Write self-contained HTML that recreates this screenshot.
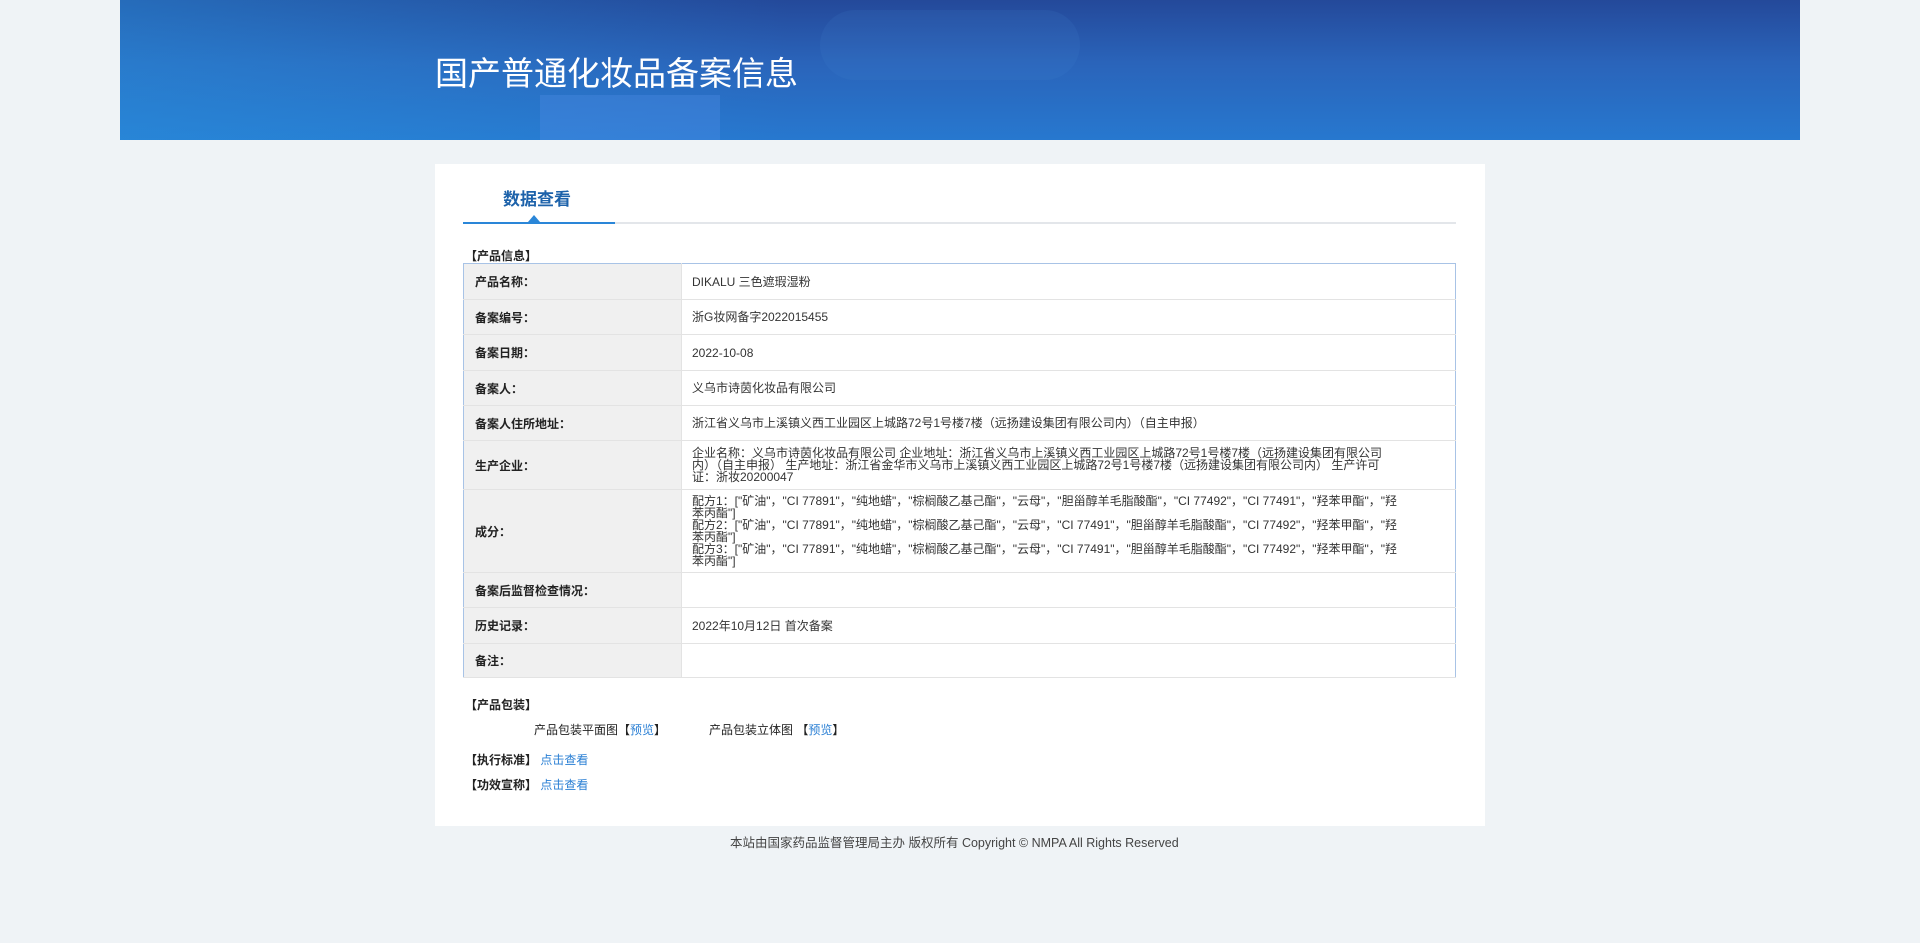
<!DOCTYPE html>
<html><head><meta charset="utf-8"><style>
*{margin:0;padding:0;box-sizing:border-box}
body{width:1920px;height:943px;background:#eff3f6;font-family:"Liberation Sans","Noto Sans CJK SC",sans-serif;color:#333;position:relative;overflow:hidden}
.ban{position:absolute;left:120px;top:0;width:1680px;height:140px;background:linear-gradient(180deg,#24499a 0%,#2a64ba 45%,#2778cf 100%);overflow:hidden}
.ban:before{content:"";position:absolute;left:0;top:0;right:0;bottom:0;background:linear-gradient(90deg,rgba(40,150,225,.45),rgba(40,150,225,0) 40%,rgba(40,120,210,0) 100%)}
.ban .d1{position:absolute;left:420px;top:95px;width:180px;height:60px;background:rgba(80,140,230,.35)}
.ban .d2{position:absolute;left:700px;top:10px;width:260px;height:70px;border-radius:35px;background:rgba(70,140,210,.12)}
.ban h1{position:absolute;left:315px;top:52px;font-size:33px;font-weight:normal;color:#fff;letter-spacing:0;line-height:44px}
.card{position:absolute;left:435px;top:164px;width:1050px;height:662px;background:#fff}
.tab{position:absolute;left:503px;top:185px;font-size:17px;font-weight:bold;color:#1d62aa}
.gl{position:absolute;left:463px;top:222px;width:993px;height:2px;background:#e3e6ea}
.bl{position:absolute;left:463px;top:222px;width:152px;height:2px;background:#2a86d8}
.tri{position:absolute;left:528px;top:215px;width:0;height:0;border-left:6px solid transparent;border-right:6px solid transparent;border-bottom:7px solid #2a86d8}
.sec{position:absolute;font-size:12px;font-weight:bold;color:#222}
table{position:absolute;left:463px;top:263px;width:993px;border-collapse:collapse;border:1px solid #a8c3e6;font-size:12px}
td{border-bottom:1px solid #e3e3e3;vertical-align:middle}
td.l{width:218px;background:#f0f0f0;padding-left:11px;font-weight:bold;color:#222;border-right:1px solid #e3e3e3}
td.v{padding:0 56px 0 10px;color:#333;line-height:12px}
.t{position:absolute;font-size:12px;color:#222}
a{color:#2a7fd4;text-decoration:none}
.foot{position:absolute;left:730px;top:832px;font-size:12.5px;color:#444}
</style></head><body>
<div class="ban"><div class="d1"></div><div class="d2"></div><h1>国产普通化妆品备案信息</h1></div>
<div class="card"></div>
<div class="tab">数据查看</div>
<div class="gl"></div><div class="bl"></div><div class="tri"></div>
<div class="sec" style="left:465px;top:247px">【产品信息】</div>
<table>
<tr style="height:36px"><td class="l">产品名称：</td><td class="v">DIKALU 三色遮瑕湿粉</td></tr>
<tr style="height:35px"><td class="l">备案编号：</td><td class="v">浙G妆网备字2022015455</td></tr>
<tr style="height:36px"><td class="l">备案日期：</td><td class="v">2022-10-08</td></tr>
<tr style="height:35px"><td class="l">备案人：</td><td class="v">义乌市诗茵化妆品有限公司</td></tr>
<tr style="height:35px"><td class="l">备案人住所地址：</td><td class="v">浙江省义乌市上溪镇义西工业园区上城路72号1号楼7楼（远扬建设集团有限公司内）（自主申报）</td></tr>
<tr style="height:49px"><td class="l">生产企业：</td><td class="v">企业名称：义乌市诗茵化妆品有限公司 企业地址：浙江省义乌市上溪镇义西工业园区上城路72号1号楼7楼（远扬建设集团有限公司内）（自主申报） 生产地址：浙江省金华市义乌市上溪镇义西工业园区上城路72号1号楼7楼（远扬建设集团有限公司内） 生产许可证：浙妆20200047</td></tr>
<tr style="height:83px"><td class="l">成分：</td><td class="v">配方1：["矿油"，"CI 77891"，"纯地蜡"，"棕榈酸乙基己酯"，"云母"，"胆甾醇羊毛脂酸酯"，"CI 77492"，"CI 77491"，"羟苯甲酯"，"羟苯丙酯"]<br>配方2：["矿油"，"CI 77891"，"纯地蜡"，"棕榈酸乙基己酯"，"云母"，"CI 77491"，"胆甾醇羊毛脂酸酯"，"CI 77492"，"羟苯甲酯"，"羟苯丙酯"]<br>配方3：["矿油"，"CI 77891"，"纯地蜡"，"棕榈酸乙基己酯"，"云母"，"CI 77491"，"胆甾醇羊毛脂酸酯"，"CI 77492"，"羟苯甲酯"，"羟苯丙酯"]</td></tr>
<tr style="height:35px"><td class="l">备案后监督检查情况：</td><td class="v"></td></tr>
<tr style="height:36px"><td class="l">历史记录：</td><td class="v">2022年10月12日 首次备案</td></tr>
<tr style="height:34px"><td class="l">备注：</td><td class="v"></td></tr>
</table>
<div class="sec" style="left:465px;top:696px">【产品包装】</div>
<div class="t" style="left:534px;top:721px">产品包装平面图【<a>预览</a>】</div>
<div class="t" style="left:709px;top:721px">产品包装立体图 【<a>预览</a>】</div>
<div class="sec" style="left:465px;top:751px">【执行标准】 <a style="font-weight:normal">点击查看</a></div>
<div class="sec" style="left:465px;top:776px">【功效宣称】 <a style="font-weight:normal">点击查看</a></div>
<div class="foot">本站由国家药品监督管理局主办 版权所有 Copyright © NMPA All Rights Reserved</div>
</body></html>
